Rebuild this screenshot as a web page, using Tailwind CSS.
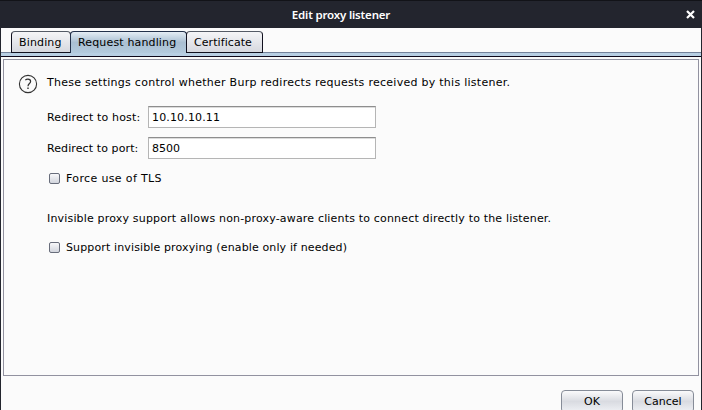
<!DOCTYPE html>
<html lang="en">
<head>
<meta charset="utf-8">
<title>Edit proxy listener</title>
<script src="https://cdn.jsdelivr.net/npm/@tailwindcss/browser@4"></script>
</head>
<body class="h-[410px] w-[702px] overflow-hidden bg-[#23252e]">
<div class="flex h-[410px] flex-col overflow-hidden text-[11px] leading-[14px] whitespace-nowrap text-black font-['DejaVu_Sans',sans-serif]">
  <header class="grid h-7 shrink-0 grid-cols-[1fr_auto_1fr] items-center border-t border-[#121318] pl-px pr-[7px] text-white">
    <span></span>
    <h1 class="pr-[14px] text-[11.5px] font-semibold leading-4 tracking-[-0.18px] font-['Noto_Sans',sans-serif]">Edit proxy listener</h1>
    <button class="justify-self-end" aria-label="Close">
      <svg class="block size-[9px]" viewBox="0 0 9 9" fill="none" stroke="#fff" stroke-width="2.2"><path d="M1 1l7 7M8 1L1 8"/></svg>
    </button>
  </header>
  <main class="mx-px flex h-[382px] shrink-0 flex-col bg-[#fbfbfb]">
    <nav class="flex h-[25px] shrink-0 items-end border-b border-[#74829a] pl-[10px]">
      <div class="relative top-px flex h-[22px] w-[60px] items-center rounded-t-[4px] border border-[#11111f] border-t-[#555b66] bg-linear-to-b from-[#f5f5f7] to-[#d6d8df] pl-[7px] pt-[2px] tracking-[0.15px]">Binding</div>
      <div class="relative top-px -ml-px flex h-[22px] w-[117px] items-center rounded-t-[4px] border border-b-0 border-[#23314a] bg-linear-to-b from-[#e4edf4] via-[#aabfd2] to-[#b3cadd] pl-[7px] tracking-[0.15px]">Request handling</div>
      <div class="relative top-px -ml-px flex h-[22px] w-[77px] items-center rounded-t-[4px] border border-[#11111f] border-t-[#555b66] bg-linear-to-b from-[#f5f5f7] to-[#d6d8df] pl-[7px] pt-[2px] tracking-[0.07px]">Certificate</div>
    </nav>
    <div class="h-1 shrink-0 border-b border-[#0d0719] bg-[#b8cfe3]"></div>
    <section class="mx-[2px] mt-[2px] flex h-[317px] shrink-0 border border-[#9292a0] pl-[14px] pt-[14px]">
      <svg class="mr-[9px] block size-5 shrink-0" viewBox="0 0 20 20" fill="none" stroke="#333"><circle cx="10" cy="10" r="8.6" stroke-width="1.1"/><path d="M7.300 6.200C8 5.500 8.900 5.200 9.900 5.200c1.600 0 2.700.8 2.700 2.200 0 2-2.600 2.300-2.600 4.800" stroke-width="1.200"/><path d="M9.300 14.300h1.400" stroke-width="1.400"/></svg>
      <div class="flex flex-col">
        <p class="h-[32px] pt-[2px] tracking-[0.27px]">These settings control whether Burp redirects requests received by this listener.</p>
        <label class="mb-[9px] flex h-[22px] items-center"><span class="w-[101px] pt-[2px] tracking-[0.14px]">Redirect to host:</span><span class="flex h-[22px] w-[228px] items-center border border-[#b5b5b5] border-t-[#8e8e8e] bg-white pl-[3px] pt-[2px] tracking-[0.15px] shadow-[inset_0_1px_0_#dcdcdc]">10.10.10.11</span></label>
        <label class="mb-[12px] flex h-[22px] items-center"><span class="w-[101px] pt-[2px] tracking-[0.1px]">Redirect to port:</span><span class="flex h-[22px] w-[228px] items-center border border-[#b5b5b5] border-t-[#8e8e8e] bg-white pl-[3px] pt-[2px] shadow-[inset_0_1px_0_#dcdcdc]">8500</span></label>
        <label class="mb-[26px] flex h-[15px] items-center pl-[2px] tracking-[0.36px]"><span class="mr-[6px] size-[11px] rounded-[2px] border border-[#686d7b] bg-linear-to-b from-[#f8f8fa] to-[#d2d5dd]"></span>Force use of TLS</label>
        <p class="mb-[15px] tracking-[0.175px]">Invisible proxy support allows non-proxy-aware clients to connect directly to the listener.</p>
        <label class="flex h-[14px] items-center pl-[2px] tracking-[0.13px]"><span class="mr-[6px] mb-px size-[11px] rounded-[2px] border border-[#686d7b] bg-linear-to-b from-[#f8f8fa] to-[#d2d5dd]"></span>Support invisible proxying (enable only if needed)</label>
      </div>
    </section>
    <footer class="mt-[14px] flex justify-end gap-[9px] pr-[7px]">
      <button class="h-[23px] w-[62px] rounded-[4px] border border-[#868c98] bg-linear-to-b from-[#fafafb] via-[#d9dbe1] to-[#eff1f5] leading-[21px]">OK</button>
      <button class="h-[23px] w-[62px] rounded-[4px] border border-[#868c98] bg-linear-to-b from-[#fafafb] via-[#d9dbe1] to-[#eff1f5] leading-[21px]">Cancel</button>
    </footer>
  </main>
</div>
</body>
</html>
